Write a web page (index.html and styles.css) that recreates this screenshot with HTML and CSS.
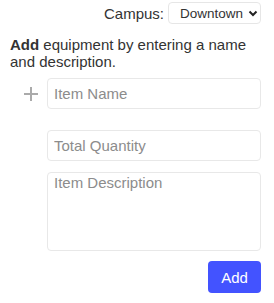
FILE: index.html
```html
<!DOCTYPE html>
<html lang="en">
<head>
    <meta charset="UTF-8">
    <meta name="viewport" content="width=device-width, initial-scale=1.0">
    <title>Add Equipment</title>
    <link rel="stylesheet" href="styles.css">
</head>
<body>
    <div class="topbar">
        <label for="campus">Campus:</label>
        <div class="select-wrap">
            <select id="campus" name="campus">
                <option>Downtown</option>
                <option>North</option>
            </select>
            <svg class="chevron" width="10" height="7" viewBox="0 0 10 7">
                <path d="M1.5 1.5 L5 5 L8.5 1.5" fill="none" stroke="#222" stroke-width="2"/>
            </svg>
        </div>
    </div>

    <p class="intro"><b>Add</b> equipment by entering a name and description.</p>

    <form class="equip-form">
        <svg class="plus" width="14" height="14" viewBox="0 0 14 14">
            <path d="M7 0 V14 M0 7 H14" stroke="#aaa" stroke-width="2"/>
        </svg>
        <input type="text" placeholder="Item Name">
        <input type="text" class="qty" placeholder="Total Quantity">
        <textarea placeholder="Item Description"></textarea>
        <button type="submit">Add</button>
    </form>
</body>
</html>
```

FILE: styles.css
```css
body {
    font-family: "Liberation Sans", Arial, sans-serif;
    font-size: 15px;
    color: #333;
    background: #fff;
    margin: 0;
    padding: 2px 13px 0 10px;
}
.topbar {
    display: flex;
    justify-content: flex-end;
    align-items: center;
    gap: 4px;
    height: 22px;
}
.select-wrap {
    position: relative;
}
.select-wrap select {
    appearance: none;
    -webkit-appearance: none;
    font-family: inherit;
    font-size: 13.5px;
    color: #333;
    background: #fff;
    border: 1px solid #e6e6e6;
    border-radius: 4px;
    height: 22px;
    width: 93px;
    padding: 0 0 0 11px;
    margin: 0;
}
.chevron {
    position: absolute;
    right: 3px;
    top: 8px;
    pointer-events: none;
}
.intro {
    margin: 12px 0 0;
    line-height: 17px;
}
.equip-form {
    display: grid;
    grid-template-columns: 37px 1fr;
    margin-top: 8px;
}
.plus {
    grid-column: 1;
    grid-row: 1;
    justify-self: end;
    align-self: center;
    margin-right: 9px;
}
.equip-form input,
.equip-form textarea {
    grid-column: 2;
    box-sizing: border-box;
    font-family: inherit;
    font-size: 15px;
    color: #333;
    border: 1px solid #e8e8e8;
    border-radius: 4px;
    padding: 0 6px;
    margin: 0;
}
.equip-form input {
    height: 31px;
}
.equip-form input.qty {
    margin-top: 21px;
}
.equip-form textarea {
    height: 79px;
    margin-top: 11px;
    padding-top: 1px;
    resize: none;
}
::placeholder {
    color: #8c8c8c;
}
.equip-form button {
    grid-column: 2;
    justify-self: end;
    margin-top: 10px;
    width: 53px;
    height: 32px;
    background: #4353ff;
    color: #fff;
    border: none;
    border-radius: 4px;
    font-family: inherit;
    font-size: 15px;
    cursor: pointer;
}
```
